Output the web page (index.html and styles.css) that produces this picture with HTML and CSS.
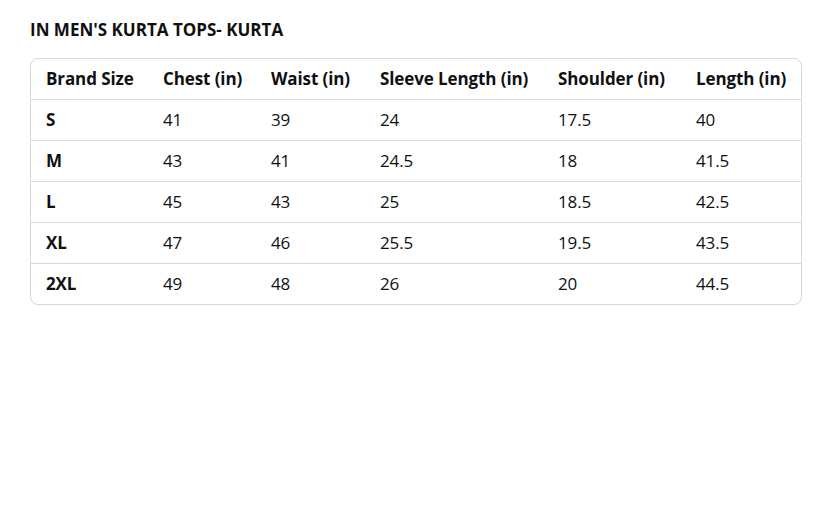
FILE: index.html
```html
<!DOCTYPE html>
<html>
<head>
<meta charset="utf-8">
<link rel="stylesheet" href="styles.css">
</head>
<body>
<div class="page">
  <h2 class="title">IN MEN'S KURTA TOPS- KURTA</h2>
  <div class="card">
    <table class="chart">
      <colgroup>
        <col class="c1"><col class="c2"><col class="c3"><col class="c4"><col class="c5"><col class="c6">
      </colgroup>
      <thead>
        <tr><th>Brand Size</th><th>Chest (in)</th><th>Waist (in)</th><th>Sleeve Length (in)</th><th>Shoulder (in)</th><th>Length (in)</th></tr>
      </thead>
      <tbody>
        <tr><th>S</th><td>41</td><td>39</td><td>24</td><td>17.5</td><td>40</td></tr>
        <tr><th>M</th><td>43</td><td>41</td><td>24.5</td><td>18</td><td>41.5</td></tr>
        <tr><th>L</th><td>45</td><td>43</td><td>25</td><td>18.5</td><td>42.5</td></tr>
        <tr><th>XL</th><td>47</td><td>46</td><td>25.5</td><td>19.5</td><td>43.5</td></tr>
        <tr><th>2XL</th><td>49</td><td>48</td><td>26</td><td>20</td><td>44.5</td></tr>
      </tbody>
    </table>
  </div>
</div>
</body>
</html>
```
FILE: styles.css
```css
html, body { margin: 0; padding: 0; background: #fff; }
body { font-family: "Open Sans", "Noto Sans", Arial, sans-serif; color: #0f1111; }
.page { padding: 19px 0 0 30px; width: 772px; }
.title { margin: 0 0 17px 0; font-size: 17px; font-weight: 700; line-height: 22px; letter-spacing: 0; }
.card { border: 1px solid #d5d9d9; border-radius: 8px; overflow: hidden; }
.chart { border-collapse: collapse; table-layout: fixed; width: 100%; font-size: 17px; }
.c1 { width: 117px; } .c2 { width: 108px; } .c3 { width: 109px; } .c4 { width: 178px; } .c5 { width: 138px; } .c6 { width: auto; }
.chart th, .chart td { text-align: left; padding: 0 0 0 15px; height: 40px; line-height: 20px; white-space: nowrap; letter-spacing: -0.1px; }
.chart th { font-weight: 700; }
.chart td { font-weight: 400; }
.chart tbody tr th, .chart tbody tr td { border-top: 1px solid #d5d9d9; }
```
